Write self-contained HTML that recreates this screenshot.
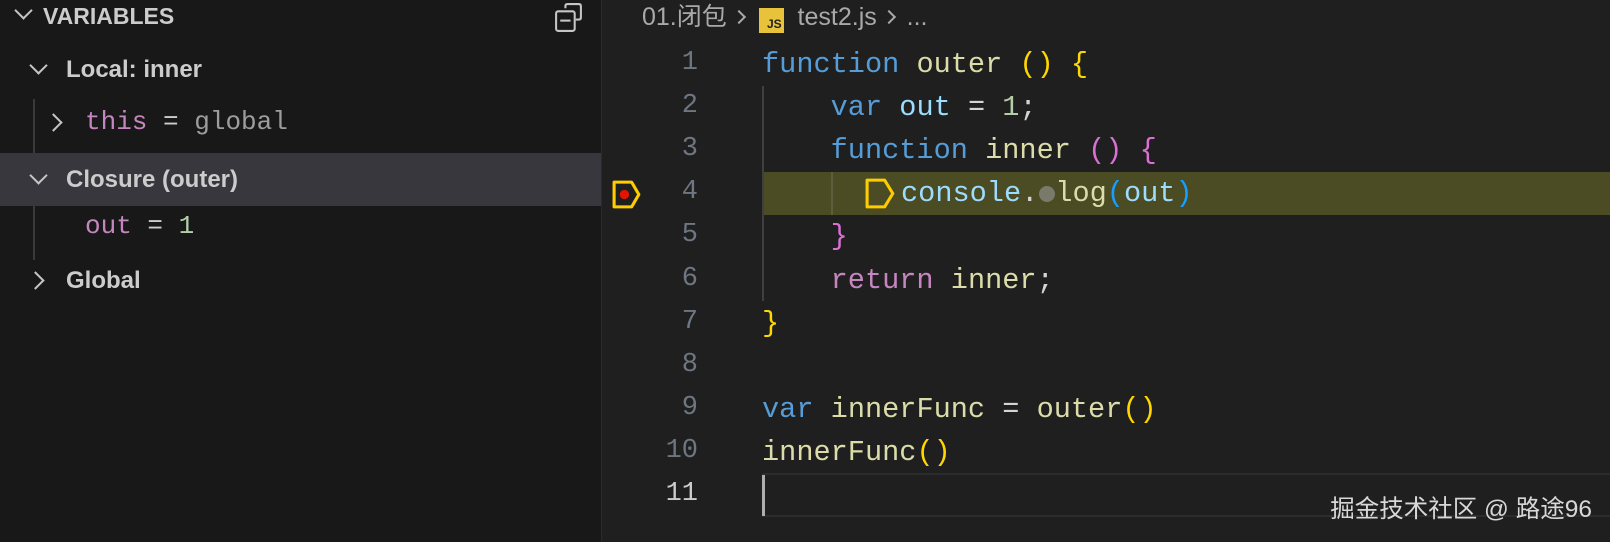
<!DOCTYPE html>
<html><head><meta charset="utf-8"><style>
*{margin:0;padding:0;box-sizing:border-box}
body{width:1610px;height:542px;overflow:hidden;background:#1f1f1f;position:relative;font-family:"Liberation Sans","Noto Sans CJK SC",sans-serif}
#side{position:absolute;left:0;top:0;width:602px;height:542px;background:#181818;border-right:1px solid #2b2b2b}
.row{position:absolute;left:0;width:601px;height:53px;color:#cccccc;font-size:24px;font-weight:bold;line-height:53px}
.chev{position:absolute;width:13px;height:13px;border-right:2px solid #c5c5c5;border-bottom:2px solid #c5c5c5}
.mono{font-family:"Liberation Mono",monospace;font-weight:normal;font-size:26px}
.code{position:absolute;font-family:"Liberation Mono",monospace;font-size:28.6px;line-height:43px;height:43px;white-space:pre;color:#d4d4d4}
.ln{position:absolute;left:600px;width:98px;text-align:right;font-family:"Liberation Mono",monospace;font-size:27px;line-height:43px;color:#6e7681}
.k{color:#569cd6}.f{color:#dcdcaa}.v{color:#9cdcfe}.n{color:#b5cea8}.y{color:#ffd700}.p{color:#da70d6}.r{color:#c586c0}.b{color:#179fff}
</style></head><body>
<div id="side">
 <div class="row" style="top:-10px;font-size:23px"><span class="chev" style="left:17px;top:14px;transform:rotate(45deg)"></span><span style="position:absolute;left:43px">VARIABLES</span></div>
 <svg style="position:absolute;left:553px;top:2px" width="31" height="31" viewBox="0 0 30 30" fill="none" stroke="#c5c5c5" stroke-width="2"><path d="M12 6 V4 Q12 2 14 2 H25 Q27 2 27 4 V15 Q27 17 25 17 H22"/><rect x="3" y="9" width="18" height="19" rx="2"/><path d="M7 18 H17"/></svg>
 <div class="row" style="top:43px"><span class="chev" style="left:32px;top:16px;transform:rotate(45deg)"></span><span style="position:absolute;left:66px">Local: inner</span></div>
 <div style="position:absolute;left:33px;top:99px;width:2px;height:54px;background:#3a3a3a"></div>
 <div class="row" style="top:96px"><span class="chev" style="left:47px;top:20px;transform:rotate(-45deg)"></span><span class="mono" style="position:absolute;left:85px"><span class="r">this</span> = <span style="color:#9d9d9d">global</span></span></div>
 <div class="row" style="top:153px;background:#37373d"><span class="chev" style="left:32px;top:16px;transform:rotate(45deg)"></span><span style="position:absolute;left:66px">Closure (outer)</span></div>
 <div style="position:absolute;left:33px;top:206px;width:2px;height:54px;background:#3a3a3a"></div>
 <div class="row" style="top:200px"><span class="mono" style="position:absolute;left:85px"><span class="r">out</span> = <span class="n">1</span></span></div>
 <div class="row" style="top:254px"><span class="chev" style="left:29px;top:20px;transform:rotate(-45deg)"></span><span style="position:absolute;left:66px">Global</span></div>
</div>
<div style="position:absolute;left:642px;top:-1px;height:36px;line-height:36px;font-size:25px;color:#a9a9a9;white-space:nowrap">01.闭包 <span style="display:inline-block;width:10px;height:10px;border-right:2px solid #a9a9a9;border-bottom:2px solid #a9a9a9;transform:rotate(-45deg);margin:0 8px 3px 0"></span> <span style="display:inline-block;width:25px;height:25px;background:#e8c23a;color:#1f1f1f;font-size:12px;font-weight:bold;line-height:33px;text-align:right;vertical-align:-3px;padding-right:2px">JS</span> &nbsp;test2.js <span style="display:inline-block;width:10px;height:10px;border-right:2px solid #a9a9a9;border-bottom:2px solid #a9a9a9;transform:rotate(-45deg);margin:0 6px 3px 0"></span> ...</div>
<div style="position:absolute;left:762px;top:172px;width:848px;height:43px;background:#4b4b24"></div>
<div style="position:absolute;left:762px;top:473px;width:848px;height:44px;border-top:2px solid #2c2c2c;border-bottom:2px solid #2c2c2c"></div>
<div style="position:absolute;left:762px;top:86px;width:2px;height:215px;background:#404040"></div>
<div style="position:absolute;left:831px;top:172px;width:2px;height:43px;background:#5e5e3c"></div>
<div style="position:absolute;left:762px;top:475px;width:3px;height:41px;background:#aeafad"></div>
<svg style="position:absolute;left:611px;top:179px" width="33" height="31" viewBox="0 0 32 30"><path d="M3 3 H20 L27 15 L20 27 H3 Z" fill="none" stroke="#ffcc00" stroke-width="3" stroke-linejoin="round"/><circle cx="13" cy="15" r="4.5" fill="#e51400"/></svg>
<div class="ln" style="top:42px">1</div><div class="ln" style="top:85px">2</div><div class="ln" style="top:128px">3</div><div class="ln" style="top:171px">4</div><div class="ln" style="top:214px">5</div><div class="ln" style="top:258px">6</div><div class="ln" style="top:301px">7</div><div class="ln" style="top:344px">8</div><div class="ln" style="top:387px">9</div><div class="ln" style="top:430px">10</div><div class="ln" style="top:473px;color:#cccccc">11</div>
<div class="code" style="left:762px;top:43px"><span class="k">function</span> <span class="f">outer</span> <span class="y">()</span> <span class="y">{</span></div>
<div class="code" style="left:762px;top:86px">    <span class="k">var</span> <span class="v">out</span> = <span class="n">1</span>;</div>
<div class="code" style="left:762px;top:129px">    <span class="k">function</span> <span class="f">inner</span> <span class="p">()</span> <span class="p">{</span></div>
<svg style="position:absolute;left:864px;top:177px" width="35" height="33" viewBox="0 0 34 32"><path d="M3 3 H20 L28 16 L20 29 H3 Z" fill="none" stroke="#ffcc00" stroke-width="3" stroke-linejoin="round"/></svg>
<div class="code" style="left:901px;top:172px"><span class="v">console</span>.<span style="display:inline-block;width:17px;text-align:center"><span style="display:inline-block;width:16px;height:16px;border-radius:50%;background:#7a7a6a;vertical-align:-1px"></span></span><span class="f">log</span><span class="b">(</span><span class="v">out</span><span class="b">)</span></div>
<div class="code" style="left:762px;top:215px">    <span class="p">}</span></div>
<div class="code" style="left:762px;top:259px">    <span class="r">return</span> <span class="f">inner</span>;</div>
<div class="code" style="left:762px;top:302px"><span class="y">}</span></div>
<div class="code" style="left:762px;top:388px"><span class="k">var</span> <span class="f">innerFunc</span> = <span class="f">outer</span><span class="y">()</span></div>
<div class="code" style="left:762px;top:431px"><span class="f">innerFunc</span><span class="y">()</span></div>
<div style="position:absolute;right:18px;top:490px;font-size:24.5px;color:#d8d8d8">掘金技术社区 @ 路途96</div>
</body></html>
